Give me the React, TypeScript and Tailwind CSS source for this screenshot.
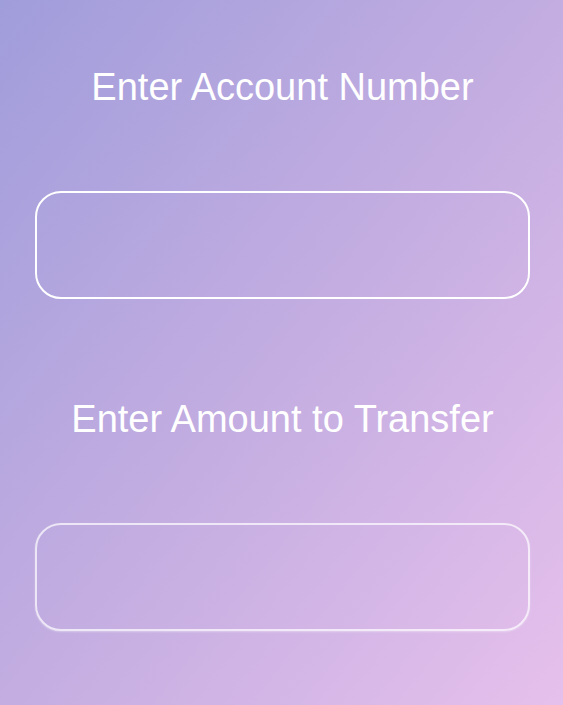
export default function App() {
  return (
    <div className="min-h-screen w-full bg-gradient-to-br from-[#a09ddb] via-[#c3ade1] to-[#e6c0ec] font-['Liberation_Sans',Arial,sans-serif] text-white">
      <div className="flex flex-col pt-[65px] pl-[35px] pr-[33px]">
        <h2 className="text-center text-[38px] leading-[44px] font-normal">
          Enter Account Number
        </h2>
        <input
          type="text"
          className="mt-[82px] h-[108px] w-full rounded-[26px] border-2 border-white bg-transparent px-6 text-[28px] text-white outline-none"
        />
        <h2 className="mt-[98px] text-center text-[38px] leading-[44px] font-normal">
          Enter Amount to Transfer
        </h2>
        <input
          type="text"
          className="mt-[82px] h-[108px] w-full rounded-[26px] border-2 border-white/70 bg-transparent px-6 text-[28px] text-white outline-none shadow-[0_1px_2px_rgba(255,255,255,0.35)]"
        />
      </div>
    </div>
  );
}
